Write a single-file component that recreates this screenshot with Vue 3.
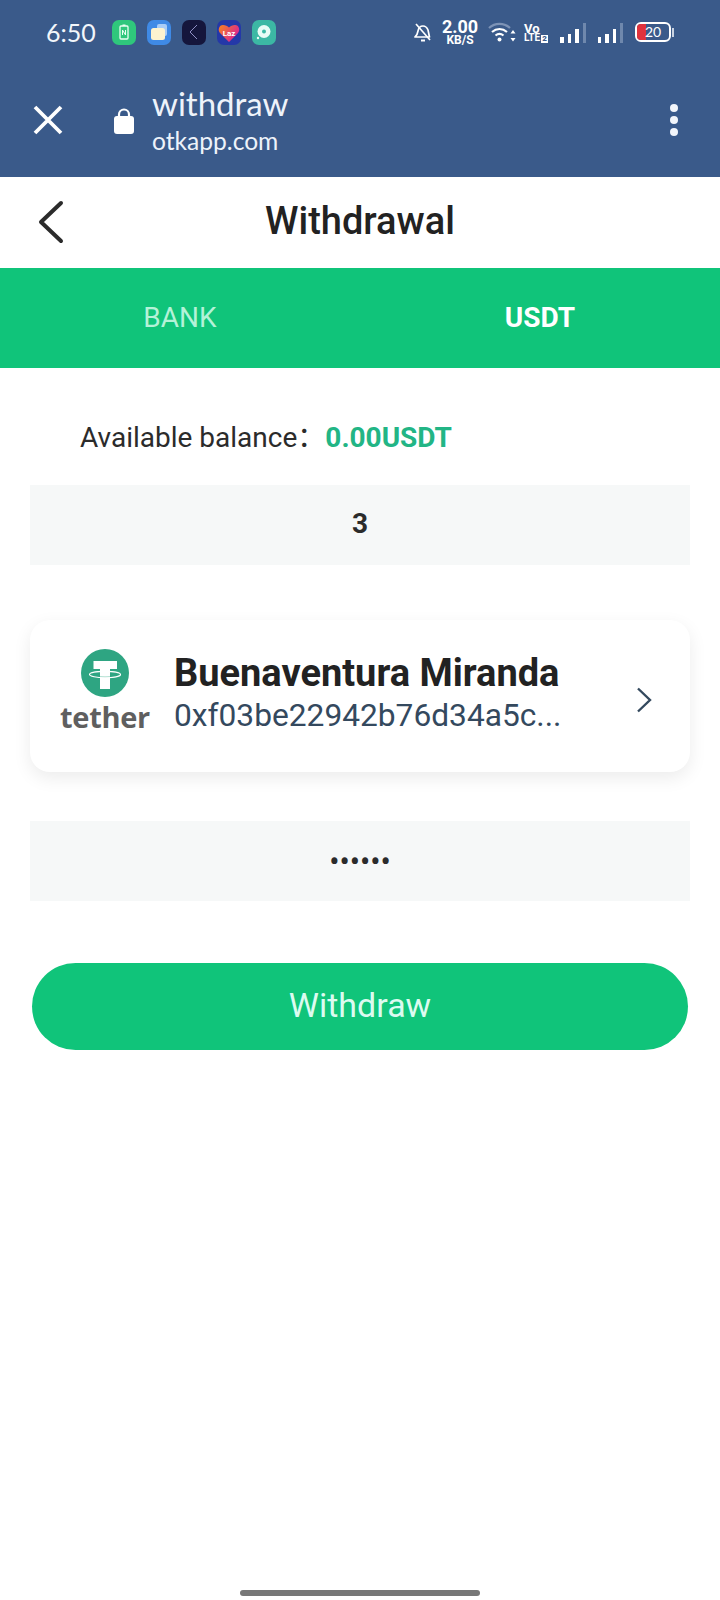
<template>
  <div class="page">
    <!-- Browser chrome -->
    <header class="chrome">
      <div class="status">
        <span class="time">6:50</span>
        <div class="apps">
          <span class="app app--green">
            <svg width="24" height="24" viewBox="0 0 24 24">
              <rect x="8" y="6" width="8" height="13" rx="1" fill="none" stroke="#eafff2" stroke-width="1.3" />
              <rect x="10.5" y="4.5" width="3" height="1.5" fill="#eafff2" />
              <path d="M10.5 15v-5l3 5v-5" fill="none" stroke="#eafff2" stroke-width="1" />
            </svg>
          </span>
          <span class="app app--blue">
            <svg width="24" height="24" viewBox="0 0 24 24">
              <rect x="10" y="4" width="10" height="12" rx="2" fill="#a9cdf7" />
              <rect x="4" y="8" width="14" height="12" rx="2.5" fill="#fdf3cf" />
            </svg>
          </span>
          <span class="app app--navy">
            <svg width="24" height="24" viewBox="0 0 24 24">
              <path d="M15 5l-7 7 7 7" fill="none" stroke="#8f8fc4" stroke-width="1" />
            </svg>
          </span>
          <span class="app app--laz">
            <svg width="24" height="25" viewBox="0 0 24 25">
              <path d="M12 22L3 13c-2.500-3-1-8 3-8 2.500 0 4.500 1 6 2.500C13.500 6 15.500 5 18 5c4 0 5.500 5 3 8z" fill="url(#lazFill)" />
              <defs>
                <linearGradient id="lazFill" x1="0" y1="0" x2="1" y2="0.6">
                  <stop offset="0" stop-color="#f7841d" />
                  <stop offset="1" stop-color="#d81f9a" />
                </linearGradient>
              </defs>
              <text x="12" y="15.500" text-anchor="middle" class="laz">Laz</text>
            </svg>
          </span>
          <span class="app app--teal">
            <svg width="24" height="24" viewBox="0 0 24 24">
              <circle cx="12" cy="11.5" r="6.5" fill="#e9fbf6" />
              <circle cx="12" cy="11.5" r="2" fill="#3cb8a4" />
              <circle cx="6" cy="18" r="1.2" fill="#e9fbf6" />
            </svg>
          </span>
        </div>

        <div class="indicators">
          <svg class="bell" width="20" height="22" viewBox="0 0 20 22">
            <path d="M2 16c2-1.500 2.500-3 3-6 .5-3 2.500-5 5-5s4 1.500 5 4l1.500 7z" fill="none" stroke="#fff" stroke-width="1.700" stroke-linejoin="round" />
            <path d="M3 3l14 16" stroke="#fff" stroke-width="1.700" />
            <path d="M8 19.500h4" stroke="#fff" stroke-width="2" />
          </svg>
          <div class="speed">
            <span class="speed__num">2.00</span>
            <span class="speed__unit">KB/S</span>
          </div>
          <svg class="wifi" width="28" height="22" viewBox="0 0 28 22">
            <path d="M1 7c6-5.500 15-5.500 21 0" fill="none" stroke="#7d93b6" stroke-width="2.200" />
            <path d="M4 11c4.500-4 10.500-4 15 0" fill="none" stroke="#fff" stroke-width="2.200" />
            <path d="M7.500 14.500c2.500-2 5.500-2 8 0" fill="none" stroke="#fff" stroke-width="2.200" />
            <circle cx="11.500" cy="18.500" r="2" fill="#fff" />
            <path d="M25 9l2.500 3.500h-5zM25 20.500l2.500-3.500h-5z" fill="#fff" />
          </svg>
          <div class="volte">
            <span class="volte__vo">Vo</span>
            <span class="volte__lte">LTE<b class="volte__sim">2</b></span>
          </div>
          <div class="signal">
            <i class="bar" style="height: 6px"></i>
            <i class="bar" style="height: 9px"></i>
            <i class="bar" style="height: 14px"></i>
            <i class="bar bar--off" style="height: 20px"></i>
          </div>
          <div class="signal">
            <i class="bar" style="height: 6px"></i>
            <i class="bar" style="height: 9px"></i>
            <i class="bar" style="height: 14px"></i>
            <i class="bar bar--off" style="height: 20px"></i>
          </div>
          <div class="battery">
            <div class="battery__body">
              <span class="battery__fill"></span>
              <span class="battery__num">20</span>
            </div>
            <span class="battery__cap"></span>
          </div>
        </div>
      </div>

      <div class="address">
        <svg class="close" width="30" height="30" viewBox="0 0 30 30">
          <path d="M2 2l26 26M28 2L2 28" stroke="#fff" stroke-width="3.800" />
        </svg>
        <svg class="lock" width="22" height="27" viewBox="0 0 22 27">
          <path d="M6 11V7.500a5 5 0 0 1 10 0V11" fill="none" stroke="#fff" stroke-width="2.200" />
          <rect x="1" y="9" width="20" height="18" rx="3" fill="#fff" />
        </svg>
        <div class="address__text">
          <div class="address__title">withdraw</div>
          <div class="address__host">otkapp.com</div>
        </div>
        <div class="dots"><i></i><i></i><i></i></div>
      </div>
    </header>

    <!-- Page title -->
    <nav class="topbar">
      <svg class="back" width="30" height="44" viewBox="0 0 30 44">
        <path d="M25 3L5 22l20 19" fill="none" stroke="#2b2b2b" stroke-width="4" stroke-linecap="round" stroke-linejoin="round" />
      </svg>
      <h1 class="topbar__title">Withdrawal</h1>
    </nav>

    <div class="tabs">
      <div v-for="tab in tabs" :key="tab" class="tab" :class="{ 'tab--active': tab === active }">{{ tab }}</div>
    </div>

    <main class="content">
      <p class="balance">
        <span>Available balance：</span>
        <strong class="balance__value">0.00USDT</strong>
      </p>

      <input class="field" type="text" value="3" readonly />

      <div class="card">
        <div class="tether">
          <svg width="48" height="48" viewBox="0 0 48 48">
            <circle cx="24" cy="24" r="24" fill="#2ea582" />
            <path d="M12.500 12H36v8h-7v20H19V20h-6.500z" fill="#fff" />
            <ellipse cx="24" cy="25.500" rx="15.500" ry="3.200" fill="none" stroke="#fff" stroke-width="1.200" />
            <path d="M19 27.500c3 .4 7 .4 10 0" fill="none" stroke="#9fd8c6" stroke-width="0.800" />
          </svg>
          <span class="tether__word">tether</span>
        </div>
        <div class="card__info">
          <div class="card__name">Buenaventura Miranda</div>
          <div class="card__addr">0xf03be22942b76d34a5c...</div>
        </div>
        <svg class="card__arrow" width="16" height="26" viewBox="0 0 16 26">
          <path d="M2 1.500L14 13 2 24.500" fill="none" stroke="#34495e" stroke-width="2.400" />
        </svg>
      </div>

      <input class="field field--pw" type="password" value="123456" readonly />

      <button type="button" class="submit">Withdraw</button>
    </main>

    <div class="home-bar"></div>
  </div>
</template>

<script setup>
import { ref } from "vue";

const tabs = ["BANK", "USDT"];
const active = ref("USDT");
</script>

<style>
html,
body {
  margin: 0;
  background: #fff;
}
</style>

<style scoped>
.page {
  position: relative;
  width: 720px;
  height: 1600px;
  overflow: hidden;
  background: #fff;
  font-family: Roboto, "Liberation Sans", "Noto Sans CJK SC", sans-serif;
  color: #222;
}

.chrome {
  height: 177px;
  background: #3a5a8a;
  color: #fff;
  box-sizing: border-box;
}

.status {
  display: flex;
  align-items: center;
  height: 64px;
  padding-left: 46px;
}

.time {
  width: 66px;
  font-family: Lato, sans-serif;
  font-size: 25px;
  color: #f2f6fb;
}

.apps {
  display: flex;
  gap: 11px;
}

.app {
  display: block;
  width: 24px;
  height: 25px;
  border-radius: 7px;
}

.app svg {
  display: block;
}

.app--green {
  background: #2fc77c;
}

.app--blue {
  background: #3f8ae6;
}

.app--navy {
  background: #15163c;
}

.app--laz {
  background: #2438a8;
}

.laz {
  font-size: 8px;
  font-weight: 700;
  fill: #fff;
}

.app--teal {
  background: #3cb8a4;
}

.indicators {
  display: flex;
  align-items: center;
  margin-left: 137px;
}

.bell {
  margin-right: 10px;
}

.speed {
  display: flex;
  flex-direction: column;
  align-items: center;
  width: 34px;
  margin-right: 11px;
  line-height: 1;
  font-weight: 700;
}

.speed__num {
  font-size: 18px;
  height: 16px;
}

.speed__unit {
  font-size: 12px;
}

.wifi {
  margin-right: 8px;
}

.volte {
  display: flex;
  flex-direction: column;
  width: 26px;
  margin-right: 10px;
  line-height: 1;
  font-weight: 700;
}

.volte__vo {
  font-size: 13px;
  height: 11px;
}

.volte__lte {
  font-size: 10px;
  letter-spacing: 0;
}

.volte__sim {
  display: inline-block;
  margin-left: 1px;
  padding: 0 1px;
  background: #fff;
  color: #3a5a8a;
  font-size: 8px;
}

.signal {
  display: flex;
  align-items: flex-end;
  gap: 4px;
  height: 22px;
  margin-right: 12px;
}

.bar {
  display: block;
  width: 3.500px;
  background: #fff;
}

.bar--off {
  width: 3px;
  background: #6f88ad;
}

.battery {
  display: flex;
  align-items: center;
}

.battery__body {
  position: relative;
  display: flex;
  align-items: center;
  justify-content: center;
  box-sizing: border-box;
  width: 36px;
  height: 20px;
  border: 2px solid #fff;
  border-radius: 6px;
  overflow: hidden;
}

.battery__fill {
  position: absolute;
  left: 0;
  top: 0;
  bottom: 0;
  width: 9px;
  background: #e0323c;
}

.battery__num {
  position: relative;
  font-family: Lato, sans-serif;
  font-size: 14px;
  line-height: 1;
}

.battery__cap {
  width: 2px;
  height: 9px;
  margin-left: 1px;
  background: #c9d3e2;
}

.address {
  display: flex;
  align-items: center;
  height: 113px;
  padding-bottom: 2px;
  box-sizing: border-box;
}

.close {
  margin-left: 33px;
}

.lock {
  margin-left: 50px;
  margin-top: 2px;
}

.address__text {
  margin-left: 17px;
  margin-top: 4px;
  flex: 1;
  font-family: Lato, sans-serif;
  color: #eef3fa;
}

.address__title {
  font-size: 33px;
  line-height: 38px;
}

.address__host {
  font-size: 24.600px;
  line-height: 38px;
}

.dots {
  display: flex;
  flex-direction: column;
  gap: 4px;
  margin-right: 42px;
}

.dots i {
  display: block;
  width: 8px;
  height: 8px;
  border-radius: 50%;
  background: #f2f5fa;
}

.topbar {
  position: relative;
  display: flex;
  align-items: center;
  justify-content: center;
  height: 91px;
  padding-bottom: 4px;
  box-sizing: border-box;
}

.back {
  position: absolute;
  left: 36px;
  top: 23px;
}

.topbar__title {
  margin: 0;
  font-size: 38px;
  font-weight: 500;
  color: #222;
}

.tabs {
  display: flex;
  height: 100px;
  background: #10c47a;
}

.tab {
  flex: 1;
  display: flex;
  align-items: center;
  justify-content: center;
  padding-bottom: 2px;
  box-sizing: border-box;
  font-size: 28px;
  color: #b4f2d8;
}

.tab--active {
  font-weight: 700;
  color: #fff;
}

.content {
  display: flex;
  flex-direction: column;
  padding: 53px 30px 0;
}

.balance {
  display: flex;
  margin: 0 0 30px 50px;
  font-size: 28px;
  line-height: 34px;
  color: #2b2b2b;
}

.balance__value {
  font-weight: 700;
  color: #22b585;
}

.field {
  display: block;
  width: 100%;
  height: 80px;
  box-sizing: border-box;
  border: none;
  outline: none;
  padding: 0 0 3px;
  background: #f6f8f8;
  font-family: Roboto, sans-serif;
  font-size: 28px;
  font-weight: 700;
  color: #2b2b2b;
  text-align: center;
}

.field--pw {
  margin-top: 49px;
  padding: 0;
  font-size: 30.500px;
  font-weight: 400;
}

.card {
  display: flex;
  align-items: center;
  height: 152px;
  margin-top: 55px;
  box-sizing: border-box;
  border-radius: 20px;
  background: #fff;
  box-shadow: 0 6px 18px rgba(0, 0, 0, 0.08);
}

.tether {
  display: flex;
  flex-direction: column;
  align-items: center;
  width: 90px;
  margin-left: 30px;
  margin-bottom: 6px;
}

.tether svg {
  display: block;
}

.tether__word {
  font-family: "Open Sans", sans-serif;
  font-size: 29px;
  font-weight: 700;
  line-height: 40px;
  letter-spacing: -0.3px;
  color: #5f5f5f;
}

.card__info {
  flex: 1;
  margin-left: 24px;
  margin-bottom: 5px;
}

.card__name {
  font-size: 38px;
  font-weight: 700;
  line-height: 44px;
  color: #222;
}

.card__addr {
  font-size: 31.700px;
  line-height: 41px;
  color: #34495e;
}

.card__arrow {
  margin-right: 38px;
  margin-top: 8px;
}

.submit {
  display: block;
  height: 87px;
  margin: 62px 2px 0;
  padding: 0 0 3px;
  border: none;
  border-radius: 44px;
  background: #10c47a;
  font-family: Roboto, sans-serif;
  font-size: 34px;
  color: #dcfbf0;
  cursor: pointer;
}

.home-bar {
  position: absolute;
  left: 240px;
  top: 1590px;
  width: 240px;
  height: 6px;
  border-radius: 3px;
  background: #777;
}
</style>
